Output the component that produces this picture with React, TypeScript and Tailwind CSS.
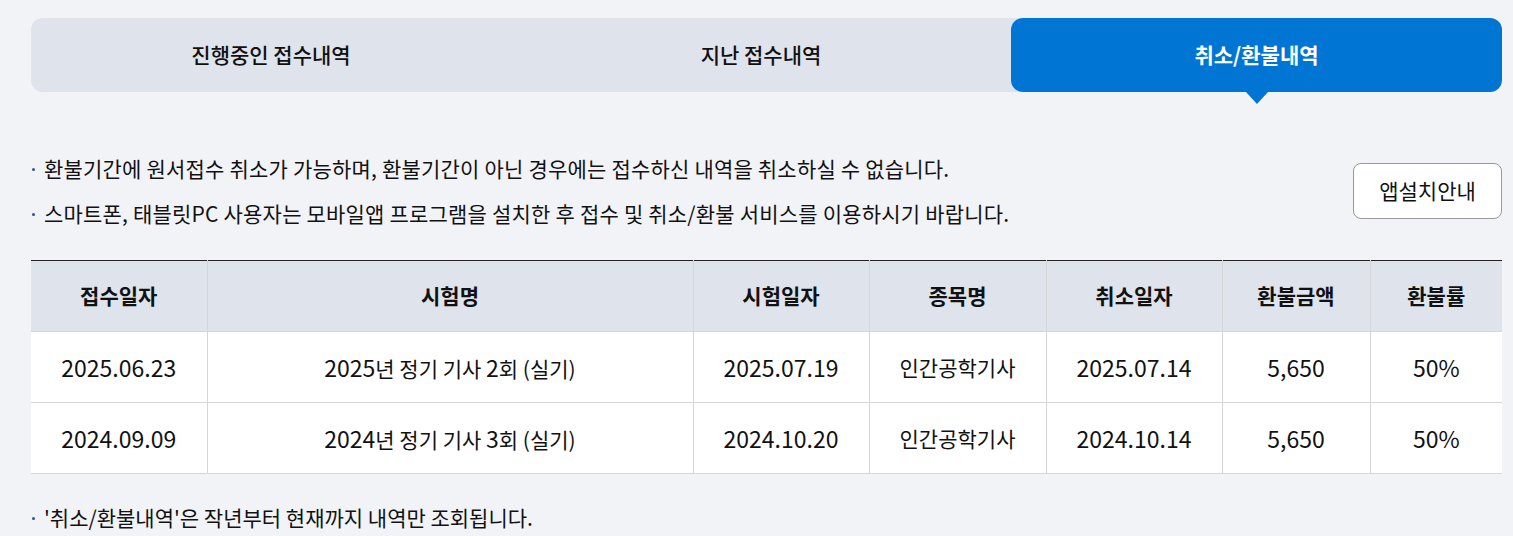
import React from "react";

const rows = [
  ["2025.06.23", "2025년 정기 기사 2회 (실기)", "2025.07.19", "인간공학기사", "2025.07.14", "5,650", "50%"],
  ["2024.09.09", "2024년 정기 기사 3회 (실기)", "2024.10.20", "인간공학기사", "2024.10.14", "5,650", "50%"],
];
const heads = ["접수일자", "시험명", "시험일자", "종목명", "취소일자", "환불금액", "환불률"];
const widths = ["w-[176px]", "w-[486px]", "w-[176px]", "w-[177px]", "w-[176px]", "w-[148px]", "w-[132px]"];

function Cell({ text }: { text: string }) {
  const parts = text.split(/([0-9.,%]+)/).filter((p) => p !== "");
  return (
    <>
      {parts.map((p, i) =>
        /^[0-9.,%]+$/.test(p) ? (
          <span key={i} className="text-[23px]">
            {p}
          </span>
        ) : (
          <span key={i}>{p}</span>
        )
      )}
    </>
  );
}

function Bullet({ children }: { children: React.ReactNode }) {
  return (
    <li className="relative pl-[13px]">
      <span className="absolute left-[1px] top-[22px] h-[3px] w-[3px] rounded-full bg-[#2a5298]" />
      {children}
    </li>
  );
}

export default function App() {
  return (
    <div className="min-h-[536px] bg-[#f1f3f7] pl-[31px] pr-[11px] pt-[18px] pb-[10px] font-['Noto_Sans_CJK_KR',sans-serif] text-[#111]">
      <div className="flex h-[74px] rounded-[12px] bg-[#dfe3eb] text-[21px]">
        <button className="flex w-[480px] items-center justify-center font-medium">진행중인 접수내역</button>
        <button className="flex w-[500px] items-center justify-center font-medium">지난 접수내역</button>
        <button className="relative flex flex-1 items-center justify-center rounded-[12px] bg-[#0075d4] font-bold text-white">
          취소/환불내역
          <span className="absolute left-1/2 top-full -translate-x-1/2 border-x-[11px] border-t-[12px] border-x-transparent border-t-[#0075d4]" />
        </button>
      </div>

      <div className="mt-[54px] flex items-center justify-between">
        <ul className="text-[21px] leading-[45px] tracking-[0.2px]">
          <Bullet>환불기간에 원서접수 취소가 가능하며, 환불기간이 아닌 경우에는 접수하신 내역을 취소하실 수 없습니다.</Bullet>
          <Bullet>스마트폰, 태블릿PC 사용자는 모바일앱 프로그램을 설치한 후 접수 및 취소/환불 서비스를 이용하시기 바랍니다.</Bullet>
        </ul>
        <button className="h-[56px] w-[149px] rounded-[8px] border border-[#999] bg-white text-[21px]">앱설치안내</button>
      </div>

      <table className="mt-[24px] w-full table-fixed border-collapse border-t border-t-[#222] text-[21px]">
        <colgroup>
          {widths.map((w, i) => (
            <col key={i} className={w} />
          ))}
        </colgroup>
        <thead>
          <tr className="h-[71px] bg-[#dfe3eb]">
            {heads.map((h, i) => (
              <th
                key={h}
                className={`border-b border-[#d4d6da] font-bold ${i > 0 ? "border-l" : ""}`}
              >
                {h}
              </th>
            ))}
          </tr>
        </thead>
        <tbody>
          {rows.map((r, ri) => (
            <tr key={ri} className="h-[71px] bg-white">
              {r.map((c, i) => (
                <td
                  key={i}
                  className={`border-b border-[#d4d6da] text-center leading-[30px] ${i > 0 ? "border-l" : ""}`}
                >
                  <Cell text={c} />
                </td>
              ))}
            </tr>
          ))}
        </tbody>
      </table>

      <ul className="mt-[28px] text-[21px] leading-[30px]">
        <li className="relative pl-[13px]">
          <span className="absolute left-[1px] top-[15px] h-[3px] w-[3px] rounded-full bg-[#2a5298]" />
          '취소/환불내역'은 작년부터 현재까지 내역만 조회됩니다.
        </li>
      </ul>
    </div>
  );
}
